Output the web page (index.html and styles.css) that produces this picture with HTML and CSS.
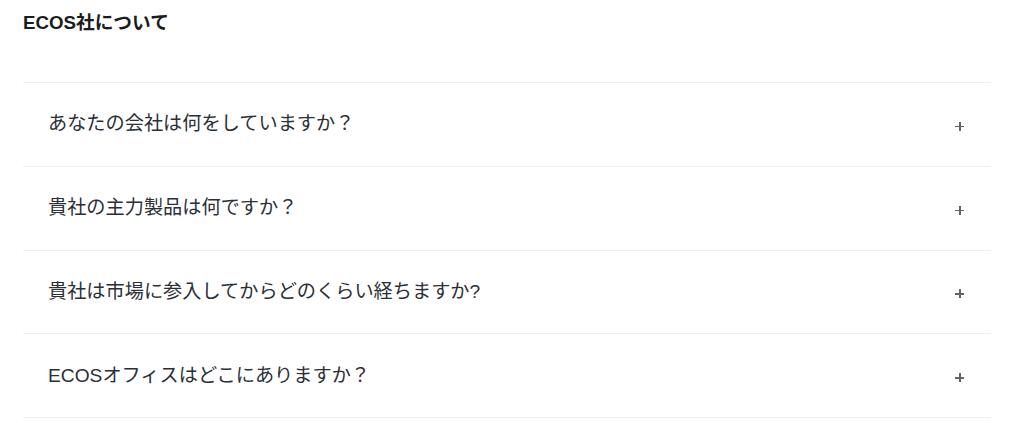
FILE: index.html
```html
<!DOCTYPE html>
<html lang="ja">
<head>
  <meta charset="UTF-8" />
  <title>ECOS社について</title>
  <link rel="stylesheet" href="styles.css">
</head>
<body>

  <div class="faq">
    <h2>ECOS社について</h2>

    <div class="item">
      <span class="q">あなたの会社は何をしていますか？</span>
      <span class="plus"></span>
    </div>
    <div class="item">
      <span class="q">貴社の主力製品は何ですか？</span>
      <span class="plus"></span>
    </div>
    <div class="item">
      <span class="q">貴社は市場に参入してからどのくらい経ちますか?</span>
      <span class="plus"></span>
    </div>
    <div class="item">
      <span class="q">ECOSオフィスはどこにありますか？</span>
      <span class="plus"></span>
    </div>
  </div>

</body>
</html>
```

FILE: styles.css
```css
body {
  margin: 0;
  background: #fff;
  font-family: "Liberation Sans", "Noto Sans CJK JP", sans-serif;
  color: #2b2f36;
}

.faq {
  width: 968px;
  margin-left: 23px;
}

h2 {
  margin: 0;
  padding-top: 7px;
  height: 75px;
  font-size: 18.7px;
  font-weight: bold;
  color: #1a1c20;
}

.item {
  display: flex;
  align-items: center;
  justify-content: space-between;
  height: 82.75px;
  padding: 0 27px 0 25px;
  border-top: 1px solid #efefef;
}

.item:last-child {
  border-bottom: 1px solid #efefef;
}

.q {
  font-size: 19.2px;
  margin-top: -4px;
}

/* plus drawn with two bars */
.plus {
  position: relative;
  width: 9px;
  height: 9px;
  margin-top: 4px;
}

.plus::before,
.plus::after {
  content: "";
  position: absolute;
  background: #5f646b;
}

.plus::before {
  left: 0;
  top: 4px;
  width: 9px;
  height: 1.5px;
}

.plus::after {
  left: 4px;
  top: 0;
  width: 1.5px;
  height: 9px;
}
```
